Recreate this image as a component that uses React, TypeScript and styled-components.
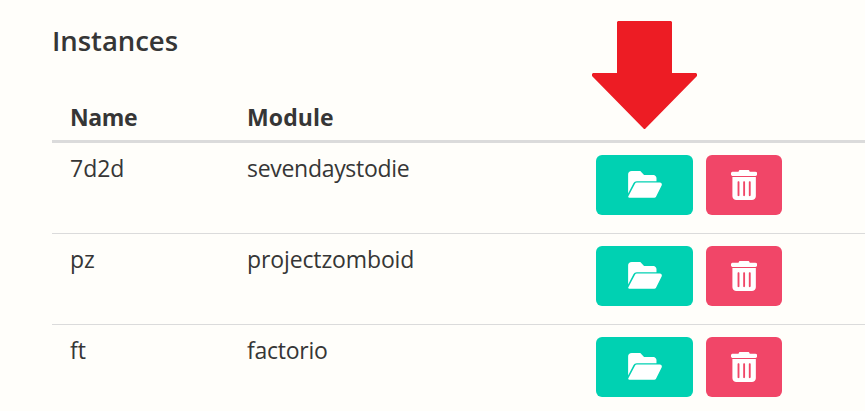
import React from "react";
import styled, { createGlobalStyle } from "styled-components";

const GlobalStyle = createGlobalStyle`
  * { box-sizing: border-box; }
  body {
    margin: 0;
    background: #fffefa;
    color: #363636;
    font-family: "Segoe UI", "Open Sans", "Noto Sans", sans-serif;
    overflow: hidden;
  }
`;

const Page = styled.main`
  position: relative;
  height: 411px;
  padding: 21px 0 0 52px;
  overflow: hidden;
`;

const Title = styled.h2`
  margin: 0;
  height: 72px;
  font-size: 27.5px;
  line-height: 40px;
  font-weight: 600;
  letter-spacing: -0.05px;
`;

const Row = styled.div`
  display: grid;
  grid-template-columns: 177px 349px 1fr;
  height: 91px;
  padding: 12px 0 0 18px;
  border-bottom: 1px solid #dbdbdb;
  font-size: 23px;
  line-height: 26px;
`;

const HeaderRow = styled(Row)`
  height: 50px;
  padding-top: 11px;
  border-bottom-width: 3px;
  font-weight: 700;
`;

const Cell = styled.span<{ $tracking?: number }>`
  letter-spacing: ${(p) => p.$tracking ?? 0}px;
`;

const Actions = styled.div`
  display: flex;
  gap: 13px;
`;

const Button = styled.button<{ $tone: "primary" | "danger" }>`
  display: flex;
  align-items: center;
  justify-content: center;
  width: ${(p) => (p.$tone === "primary" ? 97 : 76)}px;
  height: 60px;
  padding: 0;
  border: 0;
  border-radius: 6px;
  color: #fff;
  background: ${(p) => (p.$tone === "primary" ? "#00d1b2" : "#f14668")};

  svg {
    display: block;
    height: 30px;
    fill: currentColor;
  }
`;

const Arrow = styled.svg`
  position: absolute;
  left: 592px;
  top: 21px;
  fill: #ed1c24;
`;

const FolderIcon = () => (
  <svg viewBox="0 6 576 512" width="34" height="30" aria-hidden="true">
    <path d="M147.8 198H484V144C484 117.5 458.5 92 432 92h-160l-64-68h-144C21.49 24 0 49.49 0 80v328.4l90.54-175.1C101.4 211.6 123.4 198 147.8 198zM543.1 220H147.8C135.7 220 124.6 226.8 119.2 237.7L4 452C-6 470 6 480 20 480h427.1c12.12 0 23.2-6.852 28.62-17.69l96-192C583.2 245 567.7 220 543.1 220z" />
  </svg>
);

const TrashIcon = () => (
  <svg viewBox="0 0 448 512" width="26.25" height="30" aria-hidden="true">
    <path d="M135.2 13.69C140.6 2.848 151.7 -4 163.8 -4H284.2C296.3 -4 307.4 2.848 312.8 13.69L320 28H416C433.7 28 452 44 452 64C452 84 433.7 102 416 102H32C14.33 102 -4 84 -4 64C-4 44 14.33 28 32 28H128L135.2 13.69zM24 120H424V448C424 483.3 391 512 356 512H92C57 512 24 483.3 24 448V120zM112 208V432C112 440.8 119.2 448 128 448C136.8 448 144 440.8 144 432V208C144 199.2 136.8 192 128 192C119.2 192 112 199.2 112 208zM208 208V432C208 440.8 215.2 448 224 448C232.8 448 240 440.8 240 432V208C240 199.2 232.8 192 224 192C215.2 192 208 199.2 208 208zM304 208V432C304 440.8 311.2 448 320 448C328.8 448 336 440.8 336 432V208C336 199.2 328.8 192 320 192C311.2 192 304 199.2 304 208z" />
  </svg>
);

const instances = [
  { name: "7d2d", module: "sevendaystodie", tracking: -0.3 },
  { name: "pz", module: "projectzomboid", tracking: -0.12 },
  { name: "ft", module: "factorio", tracking: -0.25 },
];

export default function App() {
  return (
    <>
      <GlobalStyle />
      <Page>
        <Title>Instances</Title>
        <HeaderRow>
          <Cell $tracking={-0.4}>Name</Cell>
          <Cell $tracking={0.1}>Module</Cell>
        </HeaderRow>
        {instances.map((item) => (
          <Row key={item.name}>
            <Cell>{item.name}</Cell>
            <Cell $tracking={item.tracking}>{item.module}</Cell>
            <Actions>
              <Button $tone="primary" aria-label="Open folder">
                <FolderIcon />
              </Button>
              <Button $tone="danger" aria-label="Delete">
                <TrashIcon />
              </Button>
            </Actions>
          </Row>
        ))}
        <Arrow width="105" height="108" viewBox="0 0 105 108" aria-hidden="true">
          <path d="M26 0H79L80 1V52H104L105 53V55L53 108H52L0 55V53L1 52H25V1Z" />
        </Arrow>
      </Page>
    </>
  );
}
